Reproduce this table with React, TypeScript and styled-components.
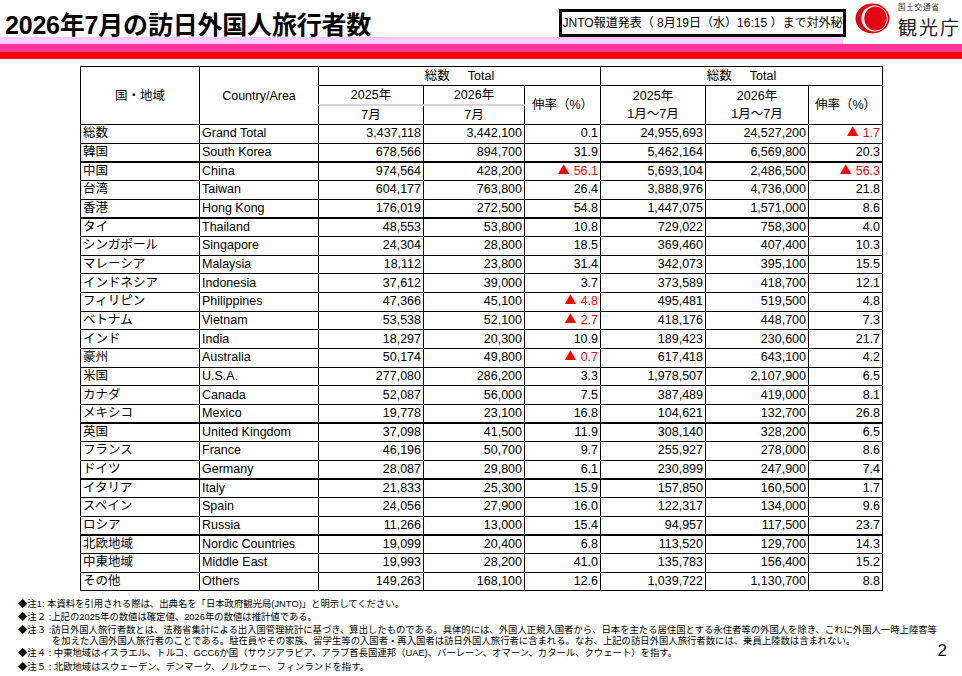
import React from 'react';
import styled, { createGlobalStyle } from 'styled-components';

const GlobalStyle = createGlobalStyle`
  body {
    margin: 0;
    background: #fff;
    color: #000;
    font-family: "Liberation Sans", "Noto Sans CJK JP", sans-serif;
  }
`;

const Page = styled.div`
  width: 962px;
  height: 676px;
  overflow: hidden;
  background: #fff;
`;

const TitleRow = styled.div`
  display: flex;
  justify-content: space-between;
  height: 37px;
`;

const Title = styled.h1`
  margin: 0;
  padding: 11px 0 0 5px;
  font-size: 25px;
  line-height: 29px;
  font-weight: 700;
  letter-spacing: -0.2px;
  white-space: nowrap;
`;

const HeaderRight = styled.div`
  display: flex;
  align-items: flex-start;
  gap: 9px;
`;

const Notice = styled.div`
  box-sizing: border-box;
  margin-top: 9px;
  width: 287px;
  height: 28px;
  border: 3px solid #000;
  font-size: 12px;
  line-height: 22px;
  text-align: center;
  white-space: nowrap;
`;

const Logo = styled.div`
  display: flex;
  align-items: flex-start;
  gap: 8px;
  padding: 3px 1px 0 0;
  background: #fff;
  height: 41px;
`;

const LogoText = styled.div`
  display: flex;
  flex-direction: column;
  font-family: "Noto Sans CJK JP", sans-serif;
`;

const Ministry = styled.span`
  font-size: 7.5px;
  line-height: 8px;
  letter-spacing: 0.8px;
  color: #333;
`;

const Agency = styled.span`
  margin-top: 5.5px;
  font-size: 19px;
  line-height: 20px;
  letter-spacing: 2px;
  color: #222;
`;

const Band = styled.div<{ $color: string; $h: number }>`
  height: ${(p) => p.$h}px;
  background: ${(p) => p.$color};
`;

const TableArea = styled.div`
  padding: 7px 0 0 80px;
`;

const Table = styled.table`
  border-collapse: collapse;
  table-layout: fixed;
  width: 802px;
  font-size: 12.5px;
  border: 1px solid #000;
`;

const HeadCell = styled.th<{ $split?: boolean; $open?: boolean }>`
  height: 18px;
  padding: 0;
  font-weight: 400;
  text-align: center;
  vertical-align: middle;
  line-height: 18px;
  white-space: nowrap;
  border: 1px solid #000;
  ${(p) => p.$split && 'border-bottom: 2px solid #d6d6d6;'}
  ${(p) => p.$open && 'border-top: none;'}
`;

const Gap = styled.span`
  margin-left: 18px;
`;

const Row = styled.tr<{ $thick?: boolean }>`
  height: 18.67px;
  & > td {
    border-bottom: ${(p) => (p.$thick ? '2px' : '1px')} solid #000;
  }
`;

const Cell = styled.td<{ $num?: boolean; $down?: boolean }>`
  padding: ${(p) => (p.$num ? '0 2px 0 0' : '0 0 0 2px')};
  border-left: 1px solid #000;
  border-right: 1px solid #000;
  text-align: ${(p) => (p.$num ? 'right' : 'left')};
  color: ${(p) => (p.$down ? '#ff0000' : '#000')};
  line-height: 17px;
  white-space: nowrap;
  overflow: hidden;
`;

const Tri = styled.span`
  font-family: "Noto Sans CJK JP", sans-serif;
  font-size: 12px;
  line-height: 1;
  margin-right: 4px;
`;

const Footer = styled.div`
  display: flex;
  justify-content: space-between;
  padding: 7px 15px 0 18px;
`;

const Notes = styled.div`
  font-size: 9.35px;
  white-space: nowrap;
`;

const Note = styled.div<{ $gap?: number; $lh?: number }>`
  line-height: ${(p) => p.$lh ?? 13}px;
  margin-top: ${(p) => p.$gap ?? 0}px;
`;

const Indent = styled.span`
  display: block;
  padding-left: 34px;
`;

const PageNo = styled.div`
  margin-top: 44px;
  font-size: 17px;
  line-height: 18px;
`;

const LogoMark = () => (
  <svg width="35" height="31" viewBox="0 0 35 31">
    <ellipse cx="17.5" cy="15.5" rx="17" ry="15" fill="#e60012" />
    <ellipse cx="19.5" cy="15.5" rx="13.2" ry="13" fill="#fff" />
    <ellipse cx="20.5" cy="15.5" rx="11.2" ry="12" fill="#e60012" />
  </svg>
);

type Data = [string, string, string, string, string, string, string, string, boolean?];

const rows: Data[] = [
  ['総数', 'Grand Total', '3,437,118', '3,442,100', '0.1', '24,955,693', '24,527,200', '▲1.7'],
  ['韓国', 'South Korea', '678,566', '894,700', '31.9', '5,462,164', '6,569,800', '20.3', true],
  ['中国', 'China', '974,564', '428,200', '▲56.1', '5,693,104', '2,486,500', '▲56.3'],
  ['台湾', 'Taiwan', '604,177', '763,800', '26.4', '3,888,976', '4,736,000', '21.8'],
  ['香港', 'Hong Kong', '176,019', '272,500', '54.8', '1,447,075', '1,571,000', '8.6', true],
  ['タイ', 'Thailand', '48,553', '53,800', '10.8', '729,022', '758,300', '4.0'],
  ['シンガポール', 'Singapore', '24,304', '28,800', '18.5', '369,460', '407,400', '10.3'],
  ['マレーシア', 'Malaysia', '18,112', '23,800', '31.4', '342,073', '395,100', '15.5'],
  ['インドネシア', 'Indonesia', '37,612', '39,000', '3.7', '373,589', '418,700', '12.1'],
  ['フィリピン', 'Philippines', '47,366', '45,100', '▲4.8', '495,481', '519,500', '4.8'],
  ['ベトナム', 'Vietnam', '53,538', '52,100', '▲2.7', '418,176', '448,700', '7.3'],
  ['インド', 'India', '18,297', '20,300', '10.9', '189,423', '230,600', '21.7'],
  ['豪州', 'Australia', '50,174', '49,800', '▲0.7', '617,418', '643,100', '4.2'],
  ['米国', 'U.S.A.', '277,080', '286,200', '3.3', '1,978,507', '2,107,900', '6.5'],
  ['カナダ', 'Canada', '52,087', '56,000', '7.5', '387,489', '419,000', '8.1'],
  ['メキシコ', 'Mexico', '19,778', '23,100', '16.8', '104,621', '132,700', '26.8', true],
  ['英国', 'United Kingdom', '37,098', '41,500', '11.9', '308,140', '328,200', '6.5'],
  ['フランス', 'France', '46,196', '50,700', '9.7', '255,927', '278,000', '8.6'],
  ['ドイツ', 'Germany', '28,087', '29,800', '6.1', '230,899', '247,900', '7.4', true],
  ['イタリア', 'Italy', '21,833', '25,300', '15.9', '157,850', '160,500', '1.7'],
  ['スペイン', 'Spain', '24,056', '27,900', '16.0', '122,317', '134,000', '9.6'],
  ['ロシア', 'Russia', '11,266', '13,000', '15.4', '94,957', '117,500', '23.7', true],
  ['北欧地域', 'Nordic Countries', '19,099', '20,400', '6.8', '113,520', '129,700', '14.3'],
  ['中東地域', 'Middle East', '19,993', '28,200', '41.0', '135,783', '156,400', '15.2'],
  ['その他', 'Others', '149,263', '168,100', '12.6', '1,039,722', '1,130,700', '8.8'],
];

const widths = [119, 119, 105, 101, 76, 105, 103, 74];

const Value = ({ v }: { v: string }) =>
  v.startsWith('▲') ? (
    <>
      <Tri>▲</Tri>
      {v.slice(1)}
    </>
  ) : (
    <>{v}</>
  );

export default function App() {
  return (
    <Page>
      <GlobalStyle />
      <TitleRow>
        <Title>2026年7月の訪日外国人旅行者数</Title>
        <HeaderRight>
          <Notice>JNTO報道発表（ 8月19日（水）16:15 ）まで対外秘</Notice>
          <Logo>
            <LogoMark />
            <LogoText>
              <Ministry>国土交通省</Ministry>
              <Agency>観光庁</Agency>
            </LogoText>
          </Logo>
        </HeaderRight>
      </TitleRow>
      <Band $h={7} $color="linear-gradient(to right, #ffccff 0 843px, #fff 843px 880px, #ffccff 880px)" />
      <Band $h={8} $color="#ff3399" />
      <Band $h={7} $color="#ff0000" />

      <TableArea>
        <Table>
          <colgroup>
            {widths.map((w, i) => (
              <col key={i} style={{ width: w }} />
            ))}
          </colgroup>
          <thead>
            <tr>
              <HeadCell rowSpan={3}>国・地域</HeadCell>
              <HeadCell rowSpan={3}>Country/Area</HeadCell>
              <HeadCell colSpan={3}>
                総数<Gap>Total</Gap>
              </HeadCell>
              <HeadCell colSpan={3}>
                総数<Gap>Total</Gap>
              </HeadCell>
            </tr>
            <tr>
              <HeadCell $split>2025年</HeadCell>
              <HeadCell $split>2026年</HeadCell>
              <HeadCell rowSpan={2}>伸率（%）</HeadCell>
              <HeadCell rowSpan={2}>
                2025年
                <br />
                1月～7月
              </HeadCell>
              <HeadCell rowSpan={2}>
                2026年
                <br />
                1月～7月
              </HeadCell>
              <HeadCell rowSpan={2}>伸率（%）</HeadCell>
            </tr>
            <tr>
              <HeadCell $open>7月</HeadCell>
              <HeadCell $open>7月</HeadCell>
            </tr>
          </thead>
          <tbody>
            {rows.map((r) => (
              <Row key={r[1]} $thick={r[8]}>
                <Cell>{r[0]}</Cell>
                <Cell>{r[1]}</Cell>
                {r.slice(2, 8).map((v, i) => (
                  <Cell key={i} $num $down={(v as string).startsWith('▲')}>
                    <Value v={v as string} />
                  </Cell>
                ))}
              </Row>
            ))}
          </tbody>
        </Table>
      </TableArea>

      <Footer>
        <Notes>
          <Note>◆注1: 本資料を引用される際は、出典名を「日本政府観光局(JNTO)」と明示してください。</Note>
          <Note>◆注２ :上記の2025年の数値は確定値、2026年の数値は推計値である。</Note>
          <Note $gap={1} $lh={11}>
            ◆注３ :訪日外国人旅行者数とは、法務省集計による出入国管理統計に基づき、算出したものである。具体的には、外国人正規入国者から、日本を主たる居住国とする永住者等の外国人を除き、これに外国人一時上陸客等
            <Indent>
              を加えた入国外国人旅行者のことである。駐在員やその家族、留学生等の入国者・再入国者は訪日外国人旅行者に含まれる。なお、上記の訪日外国人旅行者数には、乗員上陸数は含まれない。
            </Indent>
          </Note>
          <Note>◆注４ : 中東地域はイスラエル、トルコ、GCC6か国（サウジアラビア、アラブ首長国連邦（UAE)、バーレーン、オマーン、カタール、クウェート）を指す。</Note>
          <Note $gap={1}>◆注５ : 北欧地域はスウェーデン、デンマーク、ノルウェー、フィンランドを指す。</Note>
        </Notes>
        <PageNo>2</PageNo>
      </Footer>
    </Page>
  );
}
